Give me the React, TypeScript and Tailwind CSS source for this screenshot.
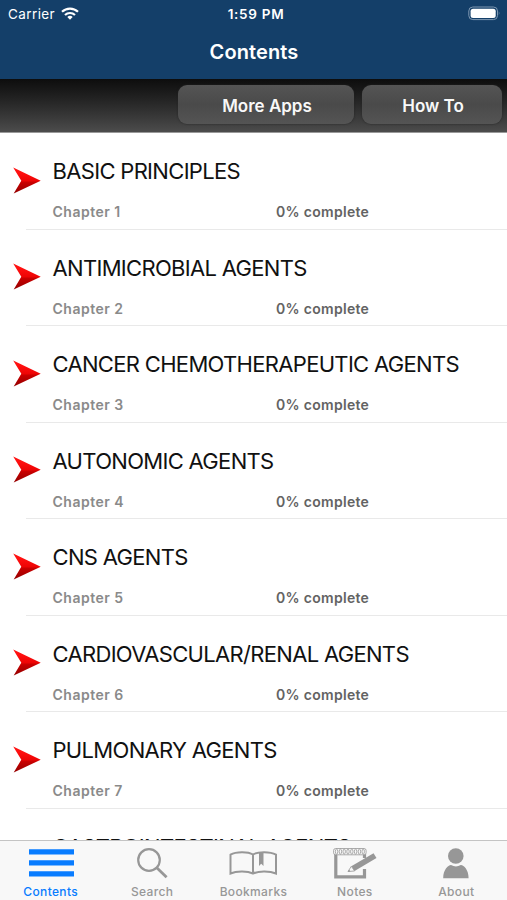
import type { ReactNode } from "react";
import clsx from "clsx";

const chapters = [
  "BASIC PRINCIPLES",
  "ANTIMICROBIAL AGENTS",
  "CANCER CHEMOTHERAPEUTIC AGENTS",
  "AUTONOMIC AGENTS",
  "CNS AGENTS",
  "CARDIOVASCULAR/RENAL AGENTS",
  "PULMONARY AGENTS",
  "GASTROINTESTINAL AGENTS",
];

function TabIcon({ children }: { children: ReactNode }) {
  return (
    <svg width="60" height="42" viewBox="0 0 60 42" fill="none" className="shrink-0">
      {children}
    </svg>
  );
}

const tabs = [
  {
    label: "Contents",
    icon: <path d="M8 8.2h45v5.3h-45zM8 19.2h45v5.3h-45zM8 30.2h45v5.3h-45z" fill="currentColor" />,
  },
  {
    label: "Search",
    icon: (
      <>
        <circle cx="27" cy="19" r="10.8" stroke="currentColor" strokeWidth="2.2" />
        <path d="M34.8 26.8 44.6 36.2" stroke="currentColor" strokeWidth="2.8" />
      </>
    ),
  },
  {
    label: "Bookmarks",
    icon: (
      <>
        <path
          d="M30 13.5C25 10.4 13 10.4 7.5 13.7V32.5C13 30 24 29.5 30 32.5C36 29.5 47 30 53 32.5V13.7C47 10.4 35 10.4 30 13.5V32"
          stroke="currentColor"
          strokeWidth="2"
        />
        <path d="M36 12h4.5v13L38.2 22.8 36 25z" fill="currentColor" />
      </>
    ),
  },
  {
    label: "Notes",
    icon: (
      <>
        <path d="M10.8 13V35.8H39.5V28M39.5 17V13" stroke="currentColor" strokeWidth="3.2" />
        <rect x="8.6" y="7.5" width="32.5" height="6.3" rx="2" fill="#f8f8f8" stroke="currentColor" strokeWidth="0.8" />
        {Array.from({ length: 8 }).map((_, i) => (
          <ellipse key={i} cx={11.6 + i * 3.8} cy="10.6" rx="1.2" ry="2.5" stroke="currentColor" strokeWidth="0.8" />
        ))}
        <path d="M26.3 25.3 48.5 12.3 51.5 16.9 29.6 30z" fill="currentColor" />
        <path d="M26.3 25.3 23 30.5 29.6 30z" fill="#f8f8f8" stroke="currentColor" strokeWidth="0.8" />
        <path d="M24.2 28.6 22.7 30.8 25.3 30.4z" fill="currentColor" />
      </>
    ),
  },
  {
    label: "About",
    icon: (
      <>
        <circle cx="29.8" cy="15" r="7.8" fill="currentColor" />
        <path d="M17.2 37.2C17.2 29 22 24.3 25 24.1Q30 27 34.8 24.1C38 24.3 42.6 29 42.6 37.2z" fill="currentColor" />
      </>
    ),
  },
];

function StatusBar() {
  return (
    <div className="grid h-[27px] grid-cols-3 items-center pl-2 pr-1.5 text-[13.5px]">
      <div className="flex items-center gap-[6px]">
        <span className="pt-px tracking-[0.4px]">Carrier</span>
        <svg width="18" height="13" viewBox="0 0 18 13" fill="none" stroke="white" strokeWidth="2.2">
          <path d="M1 4.8C5.5 0.5 12.5 0.5 17 4.8" />
          <path d="M4 8C6.8 5.3 11.2 5.3 14 8" />
          <path d="M6.3 9.9Q9 7.8 11.7 9.9L9 12.7z" fill="white" stroke="none" />
        </svg>
      </div>
      <span className="pt-px pl-[3px] text-center font-semibold tracking-[0.7px]">1:59 PM</span>
      <svg width="33" height="15" viewBox="0 0 33 15" className="justify-self-end">
        <rect x="0.8" y="1" width="28.7" height="12.6" rx="4" fill="none" stroke="#7e98b2" />
        <rect x="2.6" y="2.7" width="25.1" height="9.2" rx="2.5" fill="white" />
        <path d="M30.8 5.2q1.6 2.1 0 4.2z" fill="#7e98b2" />
      </svg>
    </div>
  );
}

function ToolbarButton({ className, children }: { className: string; children: ReactNode }) {
  return (
    <button
      className={clsx(
        "h-[39px] rounded-[9px] bg-linear-to-b from-[#545454] via-[#4a4a4a] to-[#545454] pt-[4px] pl-[2px] shadow-[0_0_2px_#222]",
        className,
      )}
    >
      {children}
    </button>
  );
}

function Arrow() {
  return (
    <svg width="30" height="28" viewBox="0 0 30 28" className="shrink-0">
      <defs>
        <linearGradient id="arrow" x1="0" y1="0" x2="0" y2="1">
          <stop offset="0.2" stopColor="#ff1010" />
          <stop offset="0.5" stopColor="#ee0505" />
          <stop offset="0.58" stopColor="#c80000" />
          <stop offset="1" stopColor="#920000" />
        </linearGradient>
      </defs>
      <path d="M1.2 0.4 28.7 13.7 1.7 26.6 9.3 13.7z" fill="url(#arrow)" />
    </svg>
  );
}

export default function App() {
  return (
    <div className="flex h-[900px] w-[507px] flex-col overflow-hidden bg-white font-['Inter','Liberation_Sans',sans-serif]">
      <header className="h-[79px] shrink-0 bg-[#143f69] text-white">
        <StatusBar />
        <h1 className="pt-[11px] pl-px text-center text-[20px] leading-7 font-semibold tracking-[0.1px]">Contents</h1>
      </header>

      {/* Toolbar */}
      <div className="flex h-[54px] shrink-0 items-start justify-end gap-2 border-b border-[#999] bg-linear-to-b from-[#0d0d0d] to-[#4c4c4c] pt-1.5 pr-[5px] text-[17px] font-semibold text-[#f8f8f8]">
        <ToolbarButton className="w-[176px]">More Apps</ToolbarButton>
        <ToolbarButton className="w-[140px]">How To</ToolbarButton>
      </div>

      {/* Chapter list */}
      <main className="min-h-0 flex-1 overflow-hidden">
        {chapters.map((title, i) => (
          <div key={title} className="flex h-[96.5px] pl-3">
            <div className="pt-[33.5px]">
              <Arrow />
            </div>
            <div className="min-w-0 flex-1 pt-[22px] pl-[10.5px]">
              <h2 className="text-[22px] leading-8 tracking-[-0.68px] whitespace-nowrap text-[#111]">{title}</h2>
              <div className="mt-[15px] grid grid-cols-[223.5px_1fr] text-[14px] leading-5 font-semibold">
                <span className="tracking-[0.5px] text-[#8a8a8a]">Chapter {i + 1}</span>
                <span className="tracking-[0.3px] text-[#636363]">0% complete</span>
              </div>
              <div className="mt-[6.5px] -ml-[26.5px] h-px bg-[#e9e9e9]" />
            </div>
          </div>
        ))}
      </main>

      <nav className="grid h-[60px] shrink-0 grid-cols-5 border-t border-[#c4c4c4] bg-[#f8f8f8]">
        {tabs.map(({ label, icon }, i) => (
          <button key={label} className={clsx("flex flex-col items-center", i === 0 ? "text-[#087cff]" : "text-[#979797]")}>
            <TabIcon>{icon}</TabIcon>
            <span className="pt-px text-[12px] leading-4 font-medium tracking-[0.35px]">{label}</span>
          </button>
        ))}
      </nav>
    </div>
  );
}
